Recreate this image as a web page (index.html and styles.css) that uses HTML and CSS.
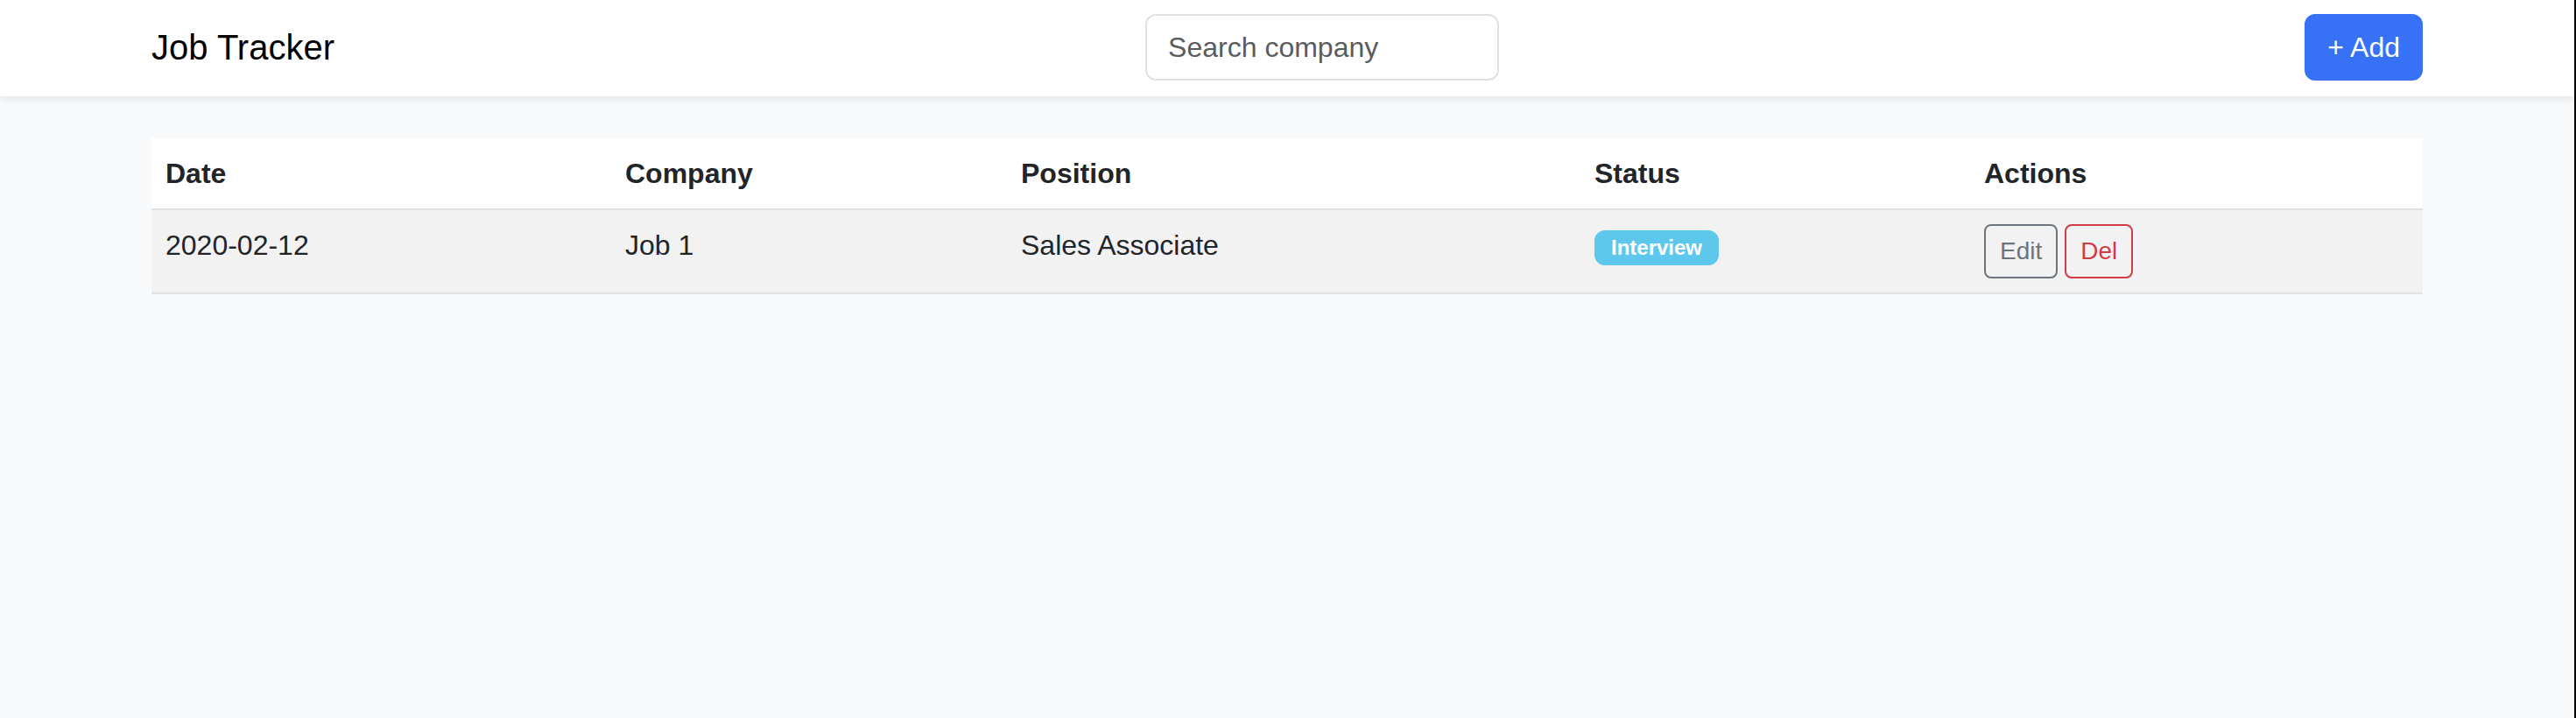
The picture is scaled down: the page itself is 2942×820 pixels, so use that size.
FILE: index.html
```html
<!DOCTYPE html>
<html lang="en">
<head>
<meta charset="utf-8">
<title>Job Tracker</title>
<link rel="stylesheet" href="styles.css">
</head>
<body>
<nav class="navbar">
  <div class="container nav-inner">
    <span class="brand">Job Tracker</span>
    <input class="search" type="text" placeholder="Search company">
    <button class="btn btn-primary">+ Add</button>
  </div>
</nav>
<main class="container main">
  <table class="jobs">
    <thead>
      <tr>
        <th class="col-date">Date</th>
        <th class="col-company">Company</th>
        <th class="col-position">Position</th>
        <th class="col-status">Status</th>
        <th class="col-actions">Actions</th>
      </tr>
    </thead>
    <tbody>
      <tr>
        <td>2020-02-12</td>
        <td>Job 1</td>
        <td>Sales Associate</td>
        <td><span class="badge">Interview</span></td>
        <td><button class="btn-sm btn-outline-secondary">Edit</button><button class="btn-sm btn-outline-danger">Del</button></td>
      </tr>
    </tbody>
  </table>
</main>
</body>
</html>
```
FILE: styles.css
```css
* { box-sizing: border-box; }
html {
  margin: 0;
  padding: 0;
  background: #000;
}
body {
  margin: 0 2px 0 0;
  padding: 0;
  min-height: 100vh;
  background: #f8f9fa;
  font-family: "Liberation Sans", Arial, sans-serif;
  font-size: 32px;
  line-height: 1.5;
  color: #212529;
}
.container {
  width: 2642px;
  margin: 0 auto;
  padding: 0 24px;
}
.navbar {
  background: #fff;
  box-shadow: 0 4px 8px rgba(0,0,0,0.075);
  padding: 16px 0 18px;
}
.nav-inner {
  display: flex;
  align-items: center;
  justify-content: space-between;
}
.brand {
  font-size: 40px;
  line-height: 1.5;
  margin-right: 6px;
  color: #000;
}
.search {
  width: 404px;
  height: 76px;
  padding: 12px 24px;
  font-family: inherit;
  font-size: 32px;
  color: #212529;
  border: 2px solid #dee2e6;
  border-radius: 12px;
  background: #fff;
  outline: none;
}
.search::placeholder { color: #595c5f; opacity: 1; }
.btn {
  font-family: inherit;
  font-size: 32px;
  line-height: 1.5;
  padding: 12px 24px;
  border-radius: 12px;
  border: 2px solid transparent;
  cursor: pointer;
}
.btn-primary {
  background: #3671f6;
  border-color: #3671f6;
  color: #fff;
}
.main { margin-top: 48px; }
.jobs {
  width: 100%;
  border-collapse: collapse;
  background: transparent;
}
.jobs thead tr { background: #fff; }
.jobs th {
  text-align: left;
  font-weight: bold;
  padding: 16px;
  line-height: 48px;
  border-bottom: 2px solid #dee2e6;
}
.jobs td {
  padding: 16px;
  line-height: 48px;
  vertical-align: top;
  border-bottom: 2px solid #dee2e6;
}
.jobs tbody tr { background: #f2f2f2; }
.col-date { width: 525px; }
.col-company { width: 452px; }
.col-position { width: 655px; }
.col-status { width: 445px; }
.col-actions { width: 517px; }
.badge {
  display: inline-block;
  background: #5ec8ec;
  color: #fff;
  font-size: 24px;
  font-weight: bold;
  line-height: 1;
  padding: 8px 19px;
  border-radius: 12px;
  vertical-align: baseline;
}
.btn-sm {
  font-family: inherit;
  font-size: 28px;
  line-height: 42px;
  padding: 8px 16px;
  border-radius: 8px;
  background: transparent;
  cursor: pointer;
  vertical-align: top;
}
.btn-outline-secondary {
  color: #6c757d;
  border: 2px solid #6c757d;
  margin-right: 8px;
}
.btn-outline-danger {
  color: #d13b44;
  border: 2px solid #d13b44;
}
```
